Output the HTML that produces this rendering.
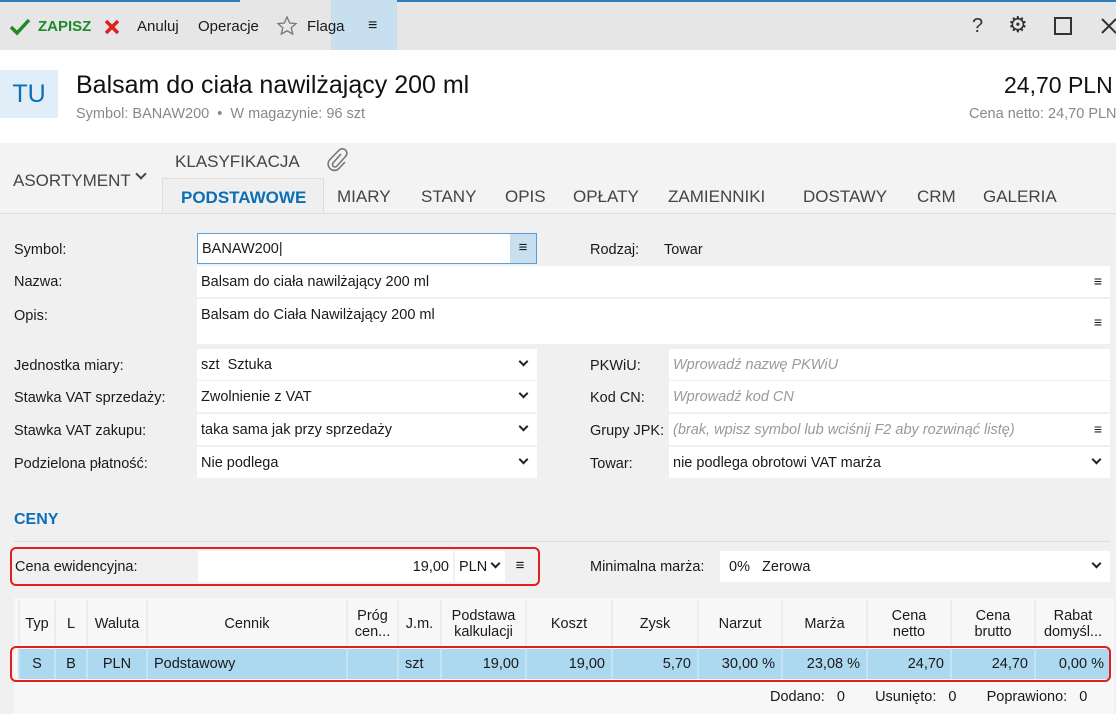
<!DOCTYPE html><html><head><meta charset="utf-8"><style>
*{box-sizing:border-box;margin:0;padding:0}
body{width:1116px;height:714px;overflow:hidden;background:#f0f0f0;font-family:"Liberation Sans",sans-serif;font-size:15px;color:#1a1a1a;position:relative}
.a{position:absolute;white-space:nowrap}
.inp{position:absolute;background:#fff;height:31px;padding:8px 4px;font-size:14.5px}
.lbl{position:absolute;font-size:14.5px}
.ph{color:#9a9a9a;font-style:italic}
.chev{position:absolute;right:10px;top:9px;width:7px;height:7px;border-right:2px solid #222;border-bottom:2px solid #222;transform:rotate(45deg)}
.hb{position:absolute;right:8px;top:7px;font-size:14px}
.tab{position:absolute;top:187px;font-size:17px;color:#444}
table{position:absolute;left:18px;top:600px;width:1092px;border-collapse:collapse;font-size:14.5px}
th{font-weight:normal;background:#f7f7f7;height:48px;border-left:2px solid #ececec;line-height:16px}
td{background:#acd8f0;height:31px;border-left:2px solid #c4e3f3;border-top:2px solid #f7f7f7;text-align:right;padding:0 6px}
</style></head><body>
<div class="a" style="left:0;top:0;width:1116px;height:50px;background:#e6e6e6"></div>
<div class="a" style="left:0;top:0;width:240px;height:2px;background:#2a7fc0"></div>
<div class="a" style="left:365px;top:0;width:751px;height:2px;background:#2a7fc0"></div>
<div class="a" style="left:331px;top:0;width:66px;height:50px;background:#c8dff0"></div>
<svg class="a" style="left:9px;top:18px" width="22" height="18"><path d="M2 9l6 6L20 2" stroke="#1f8a2a" stroke-width="3.5" fill="none"/></svg>
<div class="a" style="left:38px;top:18px;color:#1f8a2a;font-weight:bold;font-size:15px">ZAPISZ</div>
<svg class="a" style="left:103px;top:18px" width="18" height="18"><path d="M3 3l12 12M15 3L3 15" stroke="#e02020" stroke-width="3.5"/></svg>
<div class="a" style="left:137px;top:18px">Anuluj</div>
<div class="a" style="left:198px;top:18px">Operacje</div>
<svg class="a" style="left:276px;top:15px" width="22" height="22"><path d="M11 2l2.7 6 6.3.6-4.8 4.2 1.5 6.3L11 15.8 5.3 19.1l1.5-6.3L2 8.6l6.3-.6z" stroke="#777" stroke-width="1.3" fill="none"/></svg>
<div class="a" style="left:307px;top:18px">Flaga</div>
<div class="a" style="left:368px;top:17px;font-size:16px">≡</div>
<div class="a" style="left:972px;top:15px;font-size:20px;color:#333">?</div>
<div class="a" style="left:1008px;top:12px;font-size:22px;color:#333">⚙</div>
<div class="a" style="left:1054px;top:17px;width:18px;height:18px;border:2px solid #333"></div>
<svg class="a" style="left:1100px;top:17px" width="16" height="18"><path d="M2 2l14 14M16 2L2 16" stroke="#333" stroke-width="2"/></svg>
<div class="a" style="left:0;top:50px;width:1116px;height:93px;background:#fff"></div>
<div class="a" style="left:0;top:70px;width:58px;height:48px;background:#e1eef7;color:#0a6fb5;font-size:25px;text-align:center;line-height:48px">TU</div>
<div class="a" style="left:76px;top:71px;font-size:25px;color:#111">Balsam do ciała nawilżający 200 ml</div>
<div class="a" style="left:76px;top:106px;font-size:14.5px;color:#888">Symbol: BANAW200 &nbsp;•&nbsp; W magazynie: 96 szt</div>
<div class="a" style="left:1004px;top:72px;font-size:23px;color:#111">24,70 PLN</div>
<div class="a" style="left:969px;top:106px;font-size:14.5px;color:#888">Cena netto: 24,70 PLN</div>
<div class="a" style="left:0;top:143px;width:1116px;height:70px;background:#f3f3f3"></div>
<div class="a" style="left:13px;top:171px;font-size:17px;color:#444">ASORTYMENT</div>
<div class="a" style="left:137px;top:170px;width:8px;height:8px;border-right:2px solid #444;border-bottom:2px solid #444;transform:rotate(45deg)"></div>
<div class="a" style="left:175px;top:152px;font-size:17px;color:#444">KLASYFIKACJA</div>
<svg class="a" style="left:326px;top:148px" width="22" height="24"><path d="M15 6l-8 9a2.5 2.5 0 0 0 3.5 3.5l9-10a4.5 4.5 0 0 0-6.4-6.4L4 11.5a6.3 6.3 0 0 0 9 9l6-6.5" stroke="#777" stroke-width="1.6" fill="none"/></svg>
<div class="a" style="left:162px;top:178px;width:162px;height:36px;background:#efefef;border:1px solid #ddd;border-bottom:none"></div>
<div class="a" style="left:181px;top:188px;font-size:17px;color:#0a6fb5;font-weight:bold">PODSTAWOWE</div>
<div class="tab" style="left:337px">MIARY</div>
<div class="tab" style="left:421px">STANY</div>
<div class="tab" style="left:505px">OPIS</div>
<div class="tab" style="left:573px">OPŁATY</div>
<div class="tab" style="left:668px">ZAMIENNIKI</div>
<div class="tab" style="left:803px">DOSTAWY</div>
<div class="tab" style="left:917px">CRM</div>
<div class="tab" style="left:983px">GALERIA</div>
<div class="a" style="left:0;top:213px;width:1116px;height:1px;background:#ddd"></div>

<div class="lbl" style="left:14px;top:242px">Symbol:</div>
<div class="inp" style="left:197px;top:233px;width:340px;border:1px solid #5aa0d8;padding-top:7px">BANAW200|</div>
<div class="a" style="left:510px;top:234px;width:26px;height:29px;background:#c8dff0;text-align:center;line-height:27px">≡</div>
<div class="lbl" style="left:590px;top:242px">Rodzaj:</div>
<div class="lbl" style="left:664px;top:242px">Towar</div>
<div class="lbl" style="left:14px;top:274px">Nazwa:</div>
<div class="inp" style="left:197px;top:266px;width:913px">Balsam do ciała nawilżający 200 ml<span class="hb">≡</span></div>
<div class="lbl" style="left:14px;top:308px">Opis:</div>
<div class="inp" style="left:197px;top:299px;width:913px;height:45px">Balsam do Ciała Nawilżający 200 ml<span class="hb" style="top:15px">≡</span></div>
<div class="lbl" style="left:14px;top:358px">Jednostka miary:</div>
<div class="inp" style="left:197px;top:349px;width:340px">szt &nbsp;Sztuka<i class="chev"></i></div>
<div class="lbl" style="left:14px;top:390px">Stawka VAT sprzedaży:</div>
<div class="inp" style="left:197px;top:381px;width:340px">Zwolnienie z VAT<i class="chev"></i></div>
<div class="lbl" style="left:14px;top:423px">Stawka VAT zakupu:</div>
<div class="inp" style="left:197px;top:414px;width:340px">taka sama jak przy sprzedaży<i class="chev"></i></div>
<div class="lbl" style="left:14px;top:456px">Podzielona płatność:</div>
<div class="inp" style="left:197px;top:447px;width:340px">Nie podlega<i class="chev"></i></div>
<div class="lbl" style="left:590px;top:358px">PKWiU:</div>
<div class="inp ph" style="left:669px;top:349px;width:441px">Wprowadź nazwę PKWiU</div>
<div class="lbl" style="left:590px;top:390px">Kod CN:</div>
<div class="inp ph" style="left:669px;top:381px;width:441px">Wprowadź kod CN</div>
<div class="lbl" style="left:590px;top:423px">Grupy JPK:</div>
<div class="inp ph" style="left:669px;top:414px;width:441px">(brak, wpisz symbol lub wciśnij F2 aby rozwinąć listę)<span class="hb" style="color:#222;font-style:normal">≡</span></div>
<div class="lbl" style="left:590px;top:456px">Towar:</div>
<div class="inp" style="left:669px;top:447px;width:441px">nie podlega obrotowi VAT marża<i class="chev"></i></div>

<div class="a" style="left:14px;top:511px;font-size:16px;font-weight:bold;color:#0a6fb5">CENY</div>
<div class="a" style="left:14px;top:541px;width:1096px;height:1px;background:#ddd"></div>
<div class="lbl" style="left:15px;top:559px">Cena ewidencyjna:</div>
<div class="inp" style="left:198px;top:551px;width:255px;text-align:right;padding-right:4px">19,00</div>
<div class="inp" style="left:455px;top:551px;width:50px">PLN<i class="chev" style="right:6px"></i></div>
<div class="a" style="left:505px;top:551px;width:30px;height:31px;text-align:center;line-height:29px">≡</div>
<div class="a" style="left:10px;top:547px;width:530px;height:39px;border:2px solid #e02020;border-radius:6px"></div>
<div class="lbl" style="left:590px;top:559px">Minimalna marża:</div>
<div class="inp" style="left:720px;top:551px;width:390px;padding-left:9px">0% &nbsp; Zerowa<i class="chev"></i></div>

<div class="a" style="left:14px;top:598px;width:1100px;height:116px;background:#f7f7f7"></div>
<table><tr>
<th style="width:36px">Typ</th><th style="width:32px">L</th><th style="width:60px">Waluta</th><th style="width:200px">Cennik</th><th style="width:51px">Próg<br>cen...</th><th style="width:43px">J.m.</th><th style="width:85px">Podstawa<br>kalkulacji</th><th style="width:86px">Koszt</th><th style="width:86px">Zysk</th><th style="width:84px">Narzut</th><th style="width:85px">Marża</th><th style="width:84px">Cena<br>netto</th><th style="width:84px">Cena<br>brutto</th><th>Rabat<br>domyśl...</th></tr>
<tr><td style="text-align:center">S</td><td style="text-align:center">B</td><td style="text-align:center">PLN</td><td style="text-align:left">Podstawowy</td><td></td><td style="text-align:left">szt</td><td>19,00</td><td>19,00</td><td>5,70</td><td>30,00 %</td><td>23,08 %</td><td>24,70</td><td>24,70</td><td>0,00 %</td></tr></table>
<div class="a" style="left:10px;top:646px;width:1101px;height:36px;border:2px solid #e02020;border-radius:6px"></div>
<div class="a" style="left:770px;top:689px;font-size:14.5px;word-spacing:2px">Dodano: &nbsp;0 &nbsp;&nbsp;&nbsp;&nbsp;Usunięto: &nbsp;0 &nbsp;&nbsp;&nbsp;&nbsp;Poprawiono: &nbsp;0</div>
</body></html>
